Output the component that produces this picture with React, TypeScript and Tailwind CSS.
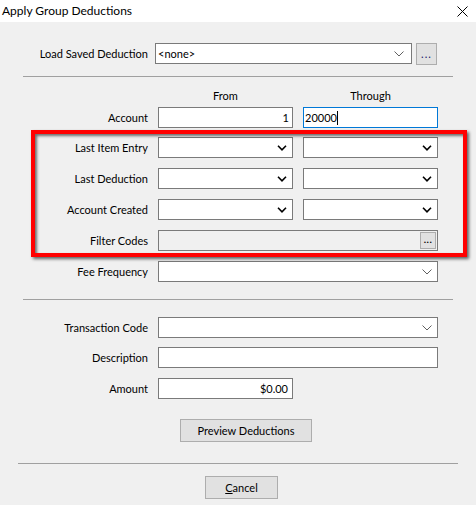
import React from "react";

const Chevron = ({ bold }: { bold?: boolean }) =>
  bold ? (
    <svg width="10" height="6" viewBox="0 0 10 6" className="shrink-0">
      <path d="M1 0.8 L5 4.8 L9 0.8" fill="none" stroke="#000" strokeWidth="1.6" />
    </svg>
  ) : (
    <svg width="10" height="6" viewBox="0 0 10 6" className="shrink-0">
      <path d="M0.5 0.5 L5 5 L9.5 0.5" fill="none" stroke="#606060" strokeWidth="1" />
    </svg>
  );

const Combo = ({
  w,
  bold,
  text,
}: {
  w: string;
  bold?: boolean;
  text?: string;
}) => (
  <div
    className={`${w} h-[21px] bg-white border border-[#7a7a7a] flex items-center justify-between pl-[2px] pr-[5px]`}
  >
    <span className="leading-none">{text ?? ""}</span>
    <Chevron bold={bold} />
  </div>
);

const Label = ({ children }: { children: React.ReactNode }) => (
  <div className="w-[148px] text-right leading-none whitespace-nowrap">{children}</div>
);

const Row = ({
  label,
  children,
  mt,
}: {
  label: string;
  children: React.ReactNode;
  mt: string;
}) => (
  <div className={`flex items-center h-[21px] ${mt}`}>
    <Label>{label}</Label>
    <div className="ml-[10px] flex items-center">{children}</div>
  </div>
);

export default function App() {
  return (
    <div
      className="w-[476px] h-[505px] bg-[#f0f0f0] relative overflow-hidden text-[11px] text-black"
      style={{ fontFamily: "Lato, 'Liberation Sans', sans-serif" }}
    >
      {/* Title bar */}
      <div className="h-[22px] bg-white flex items-center justify-between pl-[2px] pr-[8px]">
        <span className="text-[12px] leading-none">Apply Group Deductions</span>
        <svg width="11" height="11" viewBox="0 0 11 11">
          <path d="M0.5 0.5 L10.5 10.5 M10.5 0.5 L0.5 10.5" stroke="#000" strokeWidth="1" />
        </svg>
      </div>

      {/* Load saved deduction */}
      <div className="flex items-center h-[21px] mt-[21px]">
        <Label>Load Saved Deduction</Label>
        <div className="ml-[7px] w-[257px] h-[21px] bg-white border border-[#7a7a7a] flex items-center justify-between pl-[2px] pr-[7px]">
          <span className="leading-none">&lt;none&gt;</span>
          <Chevron />
        </div>
        <div className="ml-[4px] w-[21px] h-[22px] bg-[#e1e1e1] border border-[#adadad] flex items-end justify-center pb-[5px]">
          <span className="text-[11px] leading-none text-[#1a1a6a] tracking-[1px]">...</span>
        </div>
      </div>

      <div className="mt-[12px] ml-[23px] w-[430px] h-px bg-[#a0a0a0]" />

      {/* Header */}
      <div className="flex h-[14px] mt-[11px] items-center">
        <div className="w-[158px]" />
        <div className="w-[135px] text-center leading-none">From</div>
        <div className="w-[10px]" />
        <div className="w-[135px] text-center leading-none">Through</div>
      </div>

      <Row label="Account" mt="mt-[5px]">
        <div className="w-[135px] h-[21px] bg-white border border-[#7a7a7a] flex items-center justify-end pr-[3px]">
          <span className="leading-none">1</span>
        </div>
        <div className="ml-[10px] w-[135px] h-[21px] bg-white border border-[#0078d7] flex items-center pl-[1px]">
          <span className="leading-none">20000</span>
          <span className="w-px h-[14px] bg-black" />
        </div>
      </Row>

      <Row label="Last Item Entry" mt="mt-[9px]">
        <Combo w="w-[135px]" bold />
        <div className="ml-[10px]">
          <Combo w="w-[135px]" bold />
        </div>
      </Row>
      <Row label="Last Deduction" mt="mt-[10px]">
        <Combo w="w-[135px]" bold />
        <div className="ml-[10px]">
          <Combo w="w-[135px]" bold />
        </div>
      </Row>
      <Row label="Account Created" mt="mt-[10px]">
        <Combo w="w-[135px]" bold />
        <div className="ml-[10px]">
          <Combo w="w-[135px]" bold />
        </div>
      </Row>
      <Row label="Filter Codes" mt="mt-[10px]">
        <div className="w-[280px] h-[21px] bg-[#f0f0f0] border border-[#7a7a7a] flex items-center justify-end pr-[1px]">
          <div className="w-[16px] h-[17px] bg-[#e1e1e1] border border-[#adadad] flex items-center justify-center">
            <span className="text-[10px] font-bold leading-none tracking-[0.5px] -mt-[3px]">...</span>
          </div>
        </div>
      </Row>
      <Row label="Fee Frequency" mt="mt-[10px]">
        <Combo w="w-[280px]" />
      </Row>

      <div className="mt-[17px] ml-[23px] w-[430px] h-px bg-[#a0a0a0]" />

      <Row label="Transaction Code" mt="mt-[17px]">
        <Combo w="w-[280px]" />
      </Row>
      <Row label="Description" mt="mt-[9px]">
        <div className="w-[280px] h-[21px] bg-white border border-[#7a7a7a]" />
      </Row>
      <Row label="Amount" mt="mt-[10px]">
        <div className="w-[135px] h-[21px] bg-white border border-[#7a7a7a] flex items-center justify-end pr-[4px]">
          <span className="leading-none">$0.00</span>
        </div>
      </Row>

      <div className="mt-[20px] flex">
        <div className="ml-[180px] w-[132px] h-[23px] bg-[#e1e1e1] border border-[#adadad] flex items-center justify-center">
          <span className="leading-none">Preview Deductions</span>
        </div>
      </div>

      <div className="mt-[21px] ml-[18px] w-[440px] h-px bg-[#a0a0a0]" />

      <div className="mt-[12px] flex">
        <div className="ml-[205px] w-[73px] h-[23px] bg-[#e1e1e1] border border-[#adadad] flex items-center justify-center">
          <span className="leading-none">
            <span className="underline">C</span>ancel
          </span>
        </div>
      </div>

      {/* Red annotation box */}
      <div className="absolute left-[31px] top-[130px] w-[436px] h-[127px] border-4 border-[#ff0000] shadow-[2px_2px_3px_rgba(0,0,0,0.6),inset_2px_2px_3px_rgba(0,0,0,0.55)] pointer-events-none" />
    </div>
  );
}
